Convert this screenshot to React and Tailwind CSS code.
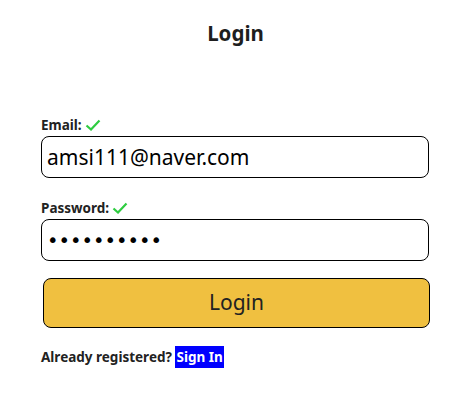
const Check = () => (
  <svg width="16" height="12" viewBox="0 0 16 12" className="ml-[3px]">
    <path d="M1.5 6.5 L6 10.5 L14.5 1.5" fill="none" stroke="#2ecc40" strokeWidth="2.2" />
  </svg>
);

export default function App() {
  return (
    <div className="min-h-screen bg-white font-['Noto_Sans',sans-serif] text-[#222]">
      <div className="pt-[19px] flex justify-center">
        <h1 className="text-[20.5px] leading-[28px] font-bold text-[#1e1e1e]">Login</h1>
      </div>
      <form className="mt-[69px] pl-[41px] pr-[42px]" onSubmit={(e) => e.preventDefault()}>
        <label className="flex items-center text-[13.5px] leading-[18px] font-bold">
          Email:
          <Check />
        </label>
        <input
          type="text"
          defaultValue="amsi111@naver.com"
          className="mt-[2px] w-full h-[42px] border border-black rounded-[8px] px-[5px] text-[21px] text-black outline-none"
        />
        <label className="mt-[21px] flex items-center text-[13.5px] leading-[18px] font-bold">
          Password:
          <Check />
        </label>
        <input
          type="password"
          defaultValue="1234567890"
          className="mt-[2px] w-full h-[42px] border border-black rounded-[8px] px-[5px] font-['DejaVu_Sans',sans-serif] text-[19.5px] text-black outline-none"
        />
        <button
          type="submit"
          className="mt-[17px] ml-[2px] w-[387px] h-[50px] bg-[#f0c040] border border-black rounded-[8px] text-[21px] text-[#222]"
        >
          Login
        </button>
        <p className="mt-[18px] text-[13.5px] leading-[22px] font-bold">
          Already registered?{" "}
          <a href="#" className="inline-block bg-[#0000ff] text-white px-[1px] leading-[22px]">
            Sign In
          </a>
        </p>
      </form>
    </div>
  );
}
